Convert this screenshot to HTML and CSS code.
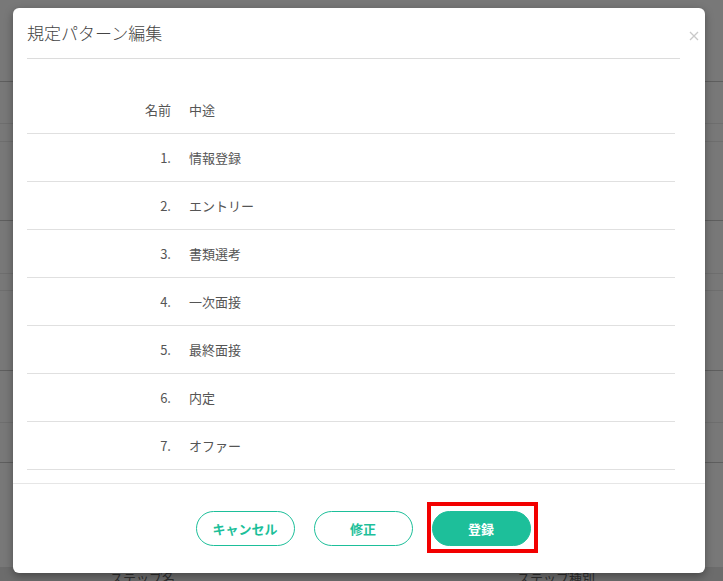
FILE: index.html
```html
<!DOCTYPE html>
<html lang="ja">
<head>
    <meta charset="UTF-8">
    <meta name="viewport" content="width=device-width, initial-scale=1.0">
    <title>規定パターン編集</title>
    <link rel="stylesheet" href="styles.css">
</head>
<body>
    <!-- page behind the overlay -->
    <div class="page">
        <div class="band h82 dark"></div>
        <div class="band h42"></div>
        <div class="band h18"></div>
        <div class="band h79 dark"></div>
        <div class="band h53"></div>
        <div class="band h17"></div>
        <div class="band h80 dark"></div>
        <div class="band h52"></div>
        <div class="band h40 dark"></div>
        <div class="page-foot">
            <span class="col-a">ステップ名</span>
            <span class="col-b">ステップ種別</span>
        </div>
    </div>

    <!-- Edit Pattern Modal -->
    <div class="modal">
        <div class="modal-header">
            <h2>規定パターン編集</h2>
            <button class="close" aria-label="close">
                <svg width="10" height="10" viewBox="0 0 10 10"><path d="M1 1 L9 9 M9 1 L1 9" stroke="#c9c9c9" stroke-width="1.3" fill="none"/></svg>
            </button>
        </div>

        <div class="modal-body">
            <table class="steps">
                <tr><td class="num">名前</td><td>中途</td></tr>
                <tr><td class="num">1.</td><td>情報登録</td></tr>
                <tr><td class="num">2.</td><td>エントリー</td></tr>
                <tr><td class="num">3.</td><td>書類選考</td></tr>
                <tr><td class="num">4.</td><td>一次面接</td></tr>
                <tr><td class="num">5.</td><td>最終面接</td></tr>
                <tr><td class="num">6.</td><td>内定</td></tr>
                <tr><td class="num">7.</td><td>オファー</td></tr>
            </table>
        </div>

        <div class="modal-footer">
            <button class="btn">キャンセル</button>
            <button class="btn">修正</button>
            <button class="btn primary marked">登録</button>
        </div>
    </div>
</body>
</html>
```

FILE: styles.css
```css
body {
    margin: 0;
    padding: 0;
    font-family: "Noto Sans CJK JP", "Noto Sans", sans-serif;
    background: #787878;
    height: 581px;
    overflow: hidden;
}
.page {
    display: flex;
    flex-direction: column;
}
.band {
    border-bottom: 1px solid #6e6e6e;
}
.band.dark {
    border-bottom: 1px solid #5e5e5e;
}
.h82 { height: 81px; }
.h42 { height: 41px; }
.h18 { height: 17px; }
.h79 { height: 78px; }
.h53 { height: 52px; }
.h17 { height: 16px; }
.h80 { height: 79px; }
.h52 { height: 51px; }
.h40 { height: 39px; }
.page-foot {
    margin-top: 104px;
    background: #6c6c6c;
    height: 30px;
    position: relative;
    font-size: 13px;
    color: #2e2e2e;
}
.page-foot span {
    position: absolute;
    top: 1px;
}
.col-a { left: 110px; }
.col-b { left: 517px; }

/* modal sits over the page */
.modal {
    position: absolute;
    left: 13px;
    top: 8px;
    width: 692px;
    height: 565px;
    background: #fff;
    border-radius: 6px;
    box-shadow: 0 3px 8px rgba(0, 0, 0, 0.35);
    display: flex;
    flex-direction: column;
}
.modal-header {
    display: flex;
    justify-content: space-between;
    align-items: center;
    height: 51px;
    margin: 0 0 0 14px;
    padding-right: 6px;
    position: relative;
}
.modal-header::after {
    content: "";
    position: absolute;
    left: 0;
    right: 25px;
    bottom: 0;
    border-bottom: 1px solid #dcdcdc;
}
.modal-header h2 {
    margin: 0;
    margin-top: -2px;
    font-size: 17px;
    font-weight: 300;
    color: #444;
}
.close {
    background: none;
    border: none;
    padding: 0;
    width: 10px;
    height: 10px;
    margin-top: 4px;
    display: flex;
}
.modal-body {
    padding: 27px 30px 13px 14px;
    flex: 1;
}
.steps {
    width: 100%;
    border-collapse: collapse;
    font-size: 13px;
    color: #555;
}
.steps td {
    height: 47px;
    padding: 0;
    border-bottom: 1px solid #e0e0e0;
    vertical-align: middle;
}
.steps td.num {
    width: 144px;
    text-align: right;
    padding-right: 18px;
}
.modal-footer {
    border-top: 1px solid #e6e6e6;
    height: 89px;
    display: flex;
    justify-content: center;
    align-items: flex-start;
    gap: 19px;
    padding-left: 8px;
}
.btn {
    margin-top: 27px;
    width: 99px;
    height: 35px;
    border-radius: 18px;
    border: 1px solid #1dbf9a;
    background: #fff;
    color: #1dbf9a;
    font-family: inherit;
    font-size: 13px;
    font-weight: bold;
    cursor: pointer;
}
.btn.primary {
    background: #1dbf9a;
    color: #fff;
    position: relative;
}
.btn.marked::after {
    content: "";
    position: absolute;
    top: -10px;
    left: -6px;
    right: -8px;
    bottom: -8px;
    border: 4px solid #f20000;
}
```
